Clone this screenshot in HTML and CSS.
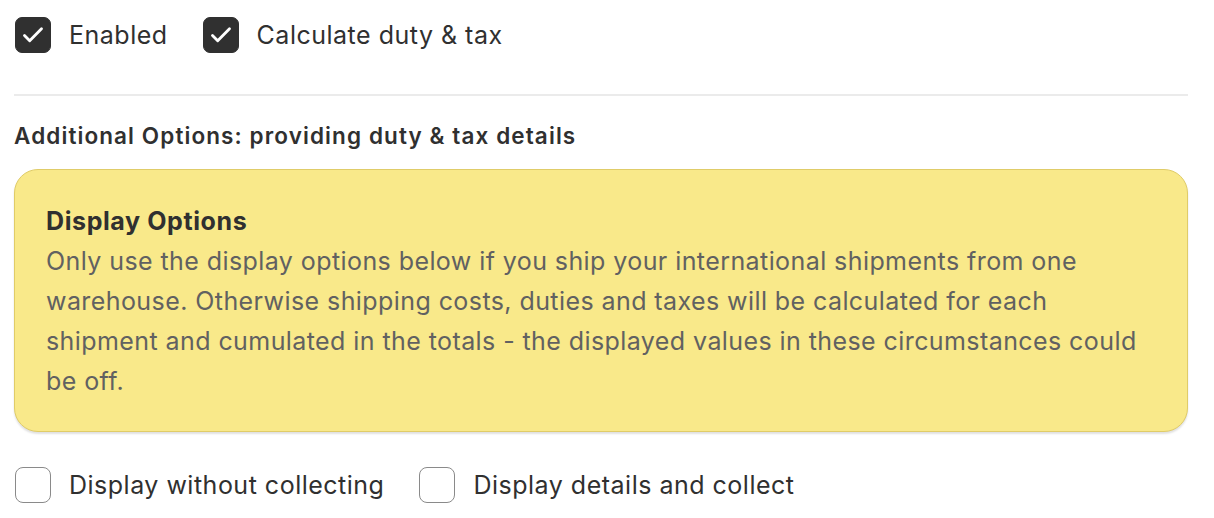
FILE: index.html
```html
<!DOCTYPE html>
<html>
<head>
<meta charset="utf-8">
<link rel="stylesheet" href="styles.css">
</head>
<body>
<div class="page">
  <div class="row top">
    <label class="check"><span class="box checked"><svg viewBox="0 0 36 36" width="36" height="36"><path d="M9 18.5l5.5 5.5L27 11.5" fill="none" stroke="#fff" stroke-width="3" stroke-linecap="round" stroke-linejoin="round"/></svg></span><span class="label">Enabled</span></label>
    <label class="check"><span class="box checked"><svg viewBox="0 0 36 36" width="36" height="36"><path d="M9 18.5l5.5 5.5L27 11.5" fill="none" stroke="#fff" stroke-width="3" stroke-linecap="round" stroke-linejoin="round"/></svg></span><span class="label">Calculate duty &amp; tax</span></label>
  </div>
  <hr class="divider">
  <h2 class="heading">Additional Options: providing duty &amp; tax details</h2>
  <div class="banner">
    <div class="banner-title">Display Options</div>
    <p class="banner-text">Only use the display options below if you ship your international shipments from one warehouse. Otherwise shipping costs, duties and taxes will be calculated for each shipment and cumulated in the totals - the displayed values in these circumstances could be off.</p>
  </div>
  <div class="row bottom">
    <label class="check"><span class="box"></span><span class="label">Display without collecting</span></label>
    <label class="check"><span class="box"></span><span class="label">Display details and collect</span></label>
  </div>
</div>
</body>
</html>
```
FILE: styles.css
```css
html, body { margin: 0; padding: 0; background: #fff; }
body { font-family: Inter, "Noto Sans", sans-serif; color: #303030; }
.page { padding: 17px 26px 0 14px; }
.row { display: flex; align-items: center; }
.top { gap: 34px; }
.bottom { gap: 34px; margin-top: 35px; }
.check { display: flex; align-items: center; gap: 18px; }
.box {
  width: 36px; height: 36px; box-sizing: border-box;
  border: 1.5px solid #8a8a8a; border-radius: 8px; background: #fff;
  display: flex; align-items: center; justify-content: center;
  margin-left: 1px; flex: none;
}
.box.checked { background: #303030; border-color: #303030; border-radius: 7px; }
.label { font-size: 25px; line-height: 36px; color: #303030; letter-spacing: 0.5px; }
.divider { border: 0; border-top: 2px solid #ebebeb; margin: 41px 0 0 0; }
.heading { font-size: 22.5px; font-weight: 600; margin: 26px 0 0 0; line-height: 28px; color: #303030; letter-spacing: 1.1px; }
.banner {
  margin-top: 19px; background: #f9e98a; border: 1.5px solid #e0cc68;
  border-radius: 24px; padding: 37px 30px 30px 31px;
  box-shadow: 0 2px 2px rgba(0,0,0,0.12);
}
.banner-title { font-size: 25px; font-weight: 700; line-height: 28px; color: #303030; letter-spacing: 0.6px; }
.banner-text { margin: 6px 0 0 0; font-size: 25px; line-height: 40px; color: #616161; letter-spacing: 0.42px; }
```
